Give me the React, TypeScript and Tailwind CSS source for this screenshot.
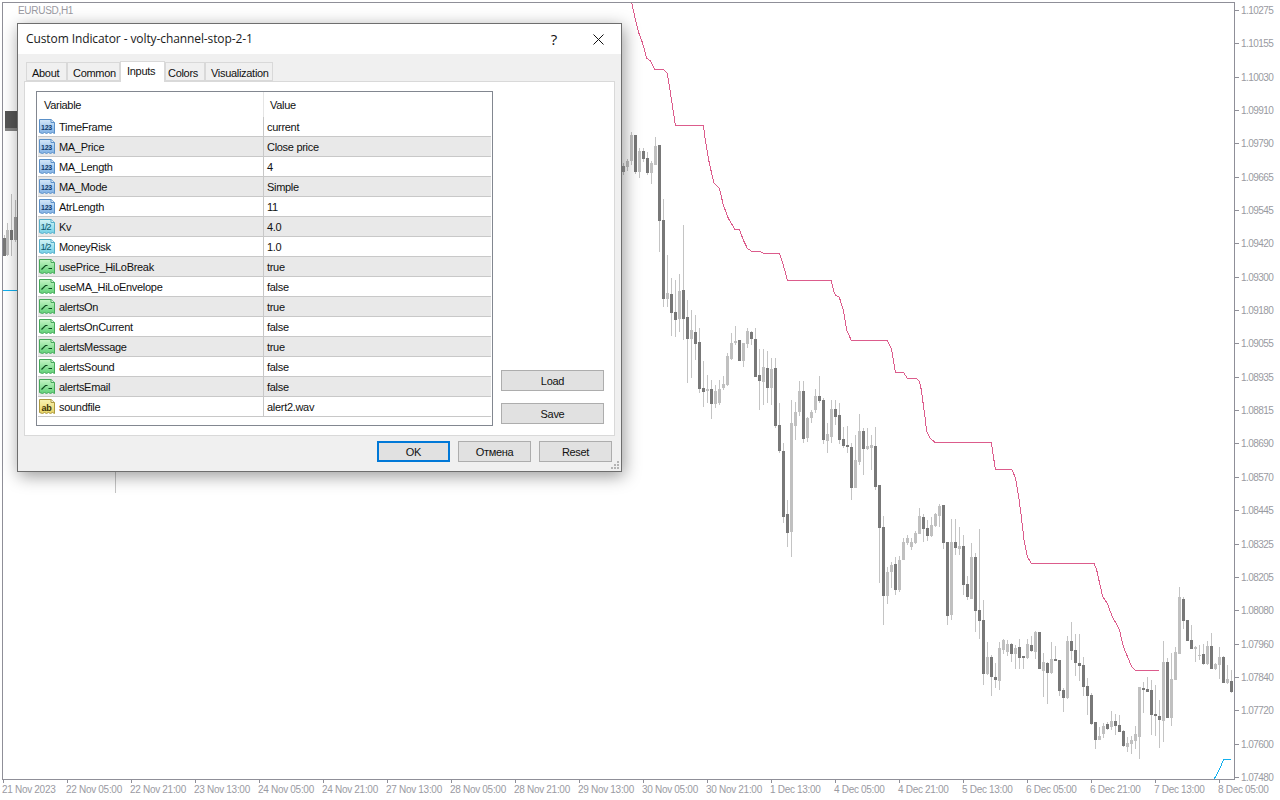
const sans = "font-['Liberation_Sans',Arial,sans-serif]"

// [center x in zoom px, wick top, body top, body bottom, wick bottom, dark] all in 3x coords
const CANDLES_A: number[][] = [
  [10, 490, 498, 516, 525, 2], [22, 478, 482, 500, 512, 0], [34, 396, 405, 483, 495, 0], [46, 405, 405, 516, 522, 1],
  [58, 444, 453, 516, 533, 0], [70, 445, 453, 477, 486, 1], [82, 456, 474, 519, 525, 1], [94, 483, 489, 519, 552, 0],
  [106, 411, 438, 495, 495, 0], [118, 435, 435, 663, 755, 1], [130, 597, 660, 897, 921, 1], [142, 765, 879, 897, 921, 0],
  [154, 834, 882, 939, 1008, 1], [166, 840, 936, 960, 1011, 1], [178, 822, 873, 957, 996, 0], [190, 675, 870, 957, 1020, 1],
  [202, 900, 951, 1017, 1150, 1], [214, 930, 990, 1017, 1133, 0], [226, 945, 996, 1032, 1080, 1], [238, 984, 1026, 1167, 1180, 1],
  [250, 1083, 1164, 1176, 1220, 1], [262, 1125, 1167, 1173, 1210, 0], [274, 1140, 1167, 1212, 1257, 1], [286, 1155, 1173, 1212, 1224, 0],
  [298, 1140, 1167, 1209, 1215, 0], [310, 1128, 1152, 1164, 1170, 0], [322, 1060, 1068, 1155, 1158, 0], [334, 1000, 1029, 1077, 1080, 0],
  [346, 978, 1023, 1029, 1035, 0], [358, 1020, 1020, 1083, 1083, 1], [370, 1030, 1029, 1083, 1100, 0], [382, 984, 993, 1032, 1044, 0],
  [394, 993, 996, 1017, 1035, 1], [406, 984, 1017, 1131, 1130, 1], [418, 1047, 1125, 1143, 1230, 1], [430, 1047, 1101, 1146, 1215, 0],
  [442, 1053, 1104, 1164, 1210, 1], [454, 1074, 1107, 1164, 1215, 0], [466, 1074, 1104, 1278, 1285, 1], [478, 1210, 1275, 1353, 1360, 1],
  [490, 1330, 1353, 1551, 1570, 1], [502, 1500, 1542, 1599, 1640, 1], [514, 1200, 1270, 1596, 1670, 0], [526, 1205, 1236, 1278, 1320, 0],
  [538, 1143, 1173, 1236, 1248, 0], [550, 1143, 1173, 1317, 1330, 1], [562, 1250, 1254, 1314, 1325, 0], [574, 1230, 1236, 1254, 1270, 0],
  [586, 1168, 1188, 1230, 1240, 0], [598, 1128, 1188, 1202, 1210, 1], [610, 1195, 1200, 1320, 1332, 1], [622, 1270, 1302, 1323, 1358, 0],
  [634, 1200, 1227, 1311, 1330, 0], [646, 1200, 1227, 1251, 1275, 1], [658, 1210, 1245, 1320, 1332, 1], [670, 1280, 1317, 1338, 1343, 1],
  [682, 1278, 1335, 1341, 1358, 1], [694, 1330, 1341, 1464, 1500, 1], [706, 1305, 1380, 1464, 1464, 0], [718, 1242, 1293, 1386, 1395, 0],
  [730, 1285, 1293, 1347, 1424, 1], [742, 1285, 1338, 1347, 1350, 0], [754, 1305, 1335, 1345, 1410, 0], [766, 1280, 1338, 1461, 1470, 1],
  [778, 1455, 1455, 1584, 1750, 1], [790, 1548, 1581, 1788, 1875, 1], [802, 1702, 1716, 1788, 1812, 0], [814, 1687, 1695, 1716, 1765, 0],
  [826, 1670, 1692, 1770, 1785, 1], [838, 1668, 1680, 1770, 1776, 0], [850, 1614, 1626, 1680, 1680, 0], [862, 1605, 1614, 1629, 1635, 0],
  [874, 1615, 1626, 1641, 1650, 0], [886, 1593, 1599, 1629, 1632, 0], [898, 1524, 1548, 1602, 1602, 0], [910, 1542, 1551, 1587, 1626, 1],
  [922, 1560, 1584, 1608, 1623, 1], [934, 1550, 1575, 1608, 1611, 0], [946, 1538, 1542, 1578, 1581, 0], [958, 1512, 1518, 1548, 1581, 0],
  [970, 1515, 1515, 1629, 1647, 1], [982, 1626, 1626, 1848, 1875, 1],
]

// same coords, but x runs from 950 and y from 400
const CANDLES_B: number[][] = [
  [4, 358, 425, 645, 660, 0], [16, 357, 426, 444, 465, 1], [28, 380, 438, 447, 465, 0], [40, 405, 438, 555, 585, 1],
  [52, 528, 552, 591, 600, 1], [64, 430, 471, 596, 598, 0], [76, 460, 471, 633, 696, 1], [88, 387, 630, 663, 717, 1],
  [100, 600, 660, 822, 855, 1], [112, 726, 771, 822, 825, 0], [124, 765, 771, 831, 888, 1], [136, 790, 831, 840, 864, 1],
  [148, 726, 744, 843, 870, 0], [160, 717, 720, 750, 762, 0], [172, 720, 732, 756, 768, 0], [184, 730, 732, 762, 786, 1],
  [196, 735, 744, 762, 807, 0], [208, 717, 741, 774, 807, 1], [220, 768, 768, 774, 807, 1], [232, 717, 732, 774, 777, 0],
  [244, 708, 735, 753, 756, 1], [256, 693, 696, 756, 777, 0], [268, 696, 696, 807, 807, 1], [280, 760, 786, 813, 891, 0],
  [292, 786, 789, 819, 912, 1], [304, 726, 777, 819, 822, 0], [316, 738, 777, 783, 783, 1], [328, 780, 780, 873, 888, 1],
  [340, 865, 870, 894, 936, 1], [352, 708, 723, 894, 897, 0], [364, 666, 723, 753, 780, 1], [376, 702, 750, 789, 828, 1],
  [388, 702, 789, 798, 843, 1], [400, 771, 795, 861, 888, 1], [412, 834, 858, 888, 945, 1], [424, 880, 885, 972, 975, 1],
  [436, 966, 966, 1020, 1047, 1], [448, 980, 1008, 1020, 1020, 0], [460, 970, 978, 1002, 1014, 0], [472, 966, 972, 987, 990, 1],
  [484, 933, 963, 981, 990, 0], [496, 942, 963, 978, 1005, 1], [508, 945, 975, 996, 996, 1], [520, 990, 993, 1038, 1041, 1],
  [532, 1011, 1029, 1041, 1056, 0], [544, 1008, 1020, 1032, 1062, 0], [556, 978, 1002, 1023, 1047, 0], [568, 861, 861, 1011, 1077, 0],
  [580, 846, 864, 870, 940, 1], [592, 831, 867, 876, 876, 1], [604, 840, 870, 945, 1005, 1], [616, 855, 942, 948, 1008, 1],
  [628, 900, 948, 960, 1044, 1], [640, 723, 786, 963, 1026, 0], [652, 774, 786, 954, 954, 1], [664, 759, 837, 954, 978, 0],
  [676, 741, 756, 840, 840, 0], [688, 561, 591, 762, 762, 0], [700, 591, 597, 663, 687, 1], [712, 660, 660, 723, 723, 1],
  [724, 675, 720, 747, 747, 1], [736, 738, 741, 747, 786, 0], [748, 735, 765, 768, 780, 0], [760, 732, 762, 792, 795, 1],
  [772, 723, 738, 792, 795, 0], [784, 699, 738, 807, 807, 1], [796, 789, 792, 807, 810, 0], [808, 741, 771, 795, 837, 0],
  [820, 768, 771, 849, 849, 1], [832, 795, 837, 849, 852, 0], [844, 810, 843, 876, 879, 1],
]

const toPx = ([x, wt, bt, bb, wb, dark]: number[], ox: number, oy: number) => ({
  x: Math.floor(ox + x / 3),
  wt: Math.round(oy + wt / 3),
  bt: Math.round(oy + bt / 3),
  bb: Math.round(oy + bb / 3),
  wb: Math.round(oy + wb / 3),
  color: dark === 1 ? '#787878' : dark === 2 ? '#9a9a9a' : '#c0c0c0',
})

const candles = [
  ...CANDLES_A.map((c) => toPx(c, 620, 0)),
  ...CANDLES_B.map((c) => toPx(c, 950, 400)),
  // what sticks out left of and below the dialog
  { x: 4, wt: 235, bt: 238, bb: 256, wb: 256, color: '#787878' },
  { x: 7, wt: 223, bt: 230, bb: 255, wb: 256, color: '#c0c0c0' },
  { x: 11, wt: 194, bt: 230, bb: 240, wb: 256, color: '#787878' },
  { x: 15, wt: 200, bt: 217, bb: 240, wb: 242, color: '#a0a0a0' },
  { x: 115, wt: 470, bt: 470, bb: 470, wb: 493, color: '#c0c0c0' },
]

const RED_A = [
  [35, 8], [42, 40], [55, 95], [68, 130], [80, 175], [92, 183], [104, 207], [130, 207], [142, 220], [150, 270], [166, 375],
  [250, 375], [256, 420], [268, 490], [282, 550], [298, 565], [310, 615], [325, 655], [345, 688], [358, 688], [370, 720],
  [382, 745], [395, 754], [420, 754], [430, 760], [478, 760], [490, 795], [502, 841], [634, 841], [640, 870], [646, 885],
  [658, 892], [670, 930], [680, 990], [694, 1021], [802, 1021], [814, 1045], [826, 1117], [850, 1117], [862, 1135], [888, 1135],
  [898, 1143], [904, 1170], [908, 1200], [915, 1250], [920, 1295], [930, 1315], [945, 1327], [990, 1327],
]
const RED_B = [
  [124, 127], [136, 208], [185, 208], [196, 232], [206, 290], [214, 350], [222, 420], [232, 470], [244, 490], [432, 490],
  [440, 510], [458, 590], [472, 610], [486, 648], [508, 688], [520, 740], [544, 798], [556, 811], [627, 811],
]
const redPoints = [
  ...RED_A.map(([x, y]) => `${620 + x / 3},${y / 3}`),
  ...RED_B.map(([x, y]) => `${950 + x / 3},${400 + y / 3}`),
].join(' ')

const PRICES = [
  '1.10275', '1.10155', '1.10030', '1.09910', '1.09790', '1.09665', '1.09545', '1.09420', '1.09300', '1.09180', '1.09055', '1.08935',
  '1.08815', '1.08690', '1.08570', '1.08445', '1.08325', '1.08205', '1.08080', '1.07960', '1.07840', '1.07720', '1.07600', '1.07480',
]

const TIMES = [
  '21 Nov 2023', '22 Nov 05:00', '22 Nov 21:00', '23 Nov 13:00', '24 Nov 05:00', '24 Nov 21:00', '27 Nov 13:00', '28 Nov 05:00',
  '28 Nov 21:00', '29 Nov 13:00', '30 Nov 05:00', '30 Nov 21:00', '1 Dec 13:00', '4 Dec 05:00', '4 Dec 21:00', '5 Dec 13:00',
  '6 Dec 05:00', '6 Dec 21:00', '7 Dec 13:00', '8 Dec 05:00',
]

type Kind = 'int' | 'dbl' | 'bool' | 'str'

const ROWS: [Kind, string, string][] = [
  ['int', 'TimeFrame', 'current'],
  ['int', 'MA_Price', 'Close price'],
  ['int', 'MA_Length', '4'],
  ['int', 'MA_Mode', 'Simple'],
  ['int', 'AtrLength', '11'],
  ['dbl', 'Kv', '4.0'],
  ['dbl', 'MoneyRisk', '1.0'],
  ['bool', 'usePrice_HiLoBreak', 'true'],
  ['bool', 'useMA_HiLoEnvelope', 'false'],
  ['bool', 'alertsOn', 'true'],
  ['bool', 'alertsOnCurrent', 'false'],
  ['bool', 'alertsMessage', 'true'],
  ['bool', 'alertsSound', 'false'],
  ['bool', 'alertsEmail', 'false'],
  ['str', 'soundfile', 'alert2.wav'],
]

const ICON_COLORS: Record<Kind, { top: string; bottom: string; line: string; ink: string }> = {
  int: { top: '#d6e8f9', bottom: '#7fb0e4', line: '#5a90c8', ink: '#123a6b' },
  dbl: { top: '#d5f4f6', bottom: '#72cfe6', line: '#55aec9', ink: '#0f5a70' },
  bool: { top: '#c6f4c6', bottom: '#5fd076', line: '#45a85a', ink: '#0d4a1e' },
  str: { top: '#f9f3b4', bottom: '#e6d264', line: '#ad9a40', ink: '#3d3408' },
}

function TypeIcon({ kind }: { kind: Kind }) {
  const c = ICON_COLORS[kind]
  const id = `grad-${kind}`
  return (
    <svg width="16" height="16" viewBox="0 0 16 16" className="shrink-0">
      <defs>
        <linearGradient id={id} x1="0" y1="0" x2="0" y2="1">
          <stop offset="0" stopColor={c.top} />
          <stop offset="1" stopColor={c.bottom} />
        </linearGradient>
      </defs>
      <path
        d="M0.5 0.5 H12 L15.5 3.5 V14.5 L13.5 13.5 L11.5 14.5 L9.5 13.5 L7.5 14.5 L5.5 13.5 L3.5 14.5 L0.5 13.5 Z"
        fill={`url(#${id})`}
        stroke={c.line}
      />
      <path d="M12 0.5 V3.5 H15.5" fill="#fff" fillOpacity="0.6" stroke={c.line} />
      {kind === 'int' && (
        <text x="7.5" y="11" textAnchor="middle" fontSize="7" fontWeight="700" letterSpacing="-0.2" fill={c.ink} fontFamily="'Liberation Sans',sans-serif">
          123
        </text>
      )}
      {kind === 'dbl' && (
        <text x="6.5" y="10.5" textAnchor="middle" fontSize="9.5" letterSpacing="-1" fill={c.ink} fontFamily="'Liberation Sans',sans-serif">
          1/2
        </text>
      )}
      {kind === 'str' && (
        <text x="7.5" y="11.5" textAnchor="middle" fontSize="9" fontWeight="700" fill={c.ink} fontFamily="'Liberation Sans',sans-serif">
          ab
        </text>
      )}
      {kind === 'bool' && <path d="M2.5 10.5 L6.5 6.5 H8.5 M9.5 9.5 H13" fill="none" stroke={c.ink} strokeWidth="1.2" />}
    </svg>
  )
}

function Chart() {
  return (
    <svg width="1231" height="776" viewBox="3 3 1231 776" className="block">
      {candles.map((c, i) => (
        <g key={i} shapeRendering="crispEdges">
          <rect x={c.x} y={c.wt} width="1" height={Math.max(c.wb - c.wt, 1)} fill="#c4c4c4" />
          <rect x={c.x - 1} y={c.bt} width="3" height={Math.max(c.bb - c.bt, 1)} fill={c.color} />
        </g>
      ))}
      <polyline points={redPoints} fill="none" stroke="#dc5c8c" strokeWidth="1" shapeRendering="crispEdges" />
      <polyline points="1214,779.5 1220,768 1223.5,760 1231,759.5" fill="none" stroke="#12b0ee" strokeWidth="1" shapeRendering="crispEdges" />
      <line x1="3" y1="290.5" x2="17" y2="290.5" stroke="#12b0ee" />
      <g shapeRendering="crispEdges">
        <rect x="5" y="111" width="12" height="17" fill="#555555" />
        <rect x="5" y="128" width="12" height="3" fill="#858585" />
      </g>
    </svg>
  )
}

function TabStrip() {
  const tabs = [
    { label: 'About', cls: 'w-[41px] pl-[5px]' },
    { label: 'Common', cls: 'w-[53px] pl-[5px]' },
    { label: 'Inputs', cls: 'w-[45px] pl-[6px]', active: true },
    { label: 'Colors', cls: 'w-[40px] pl-[2px]' },
    { label: 'Visualization', cls: 'w-[68px] pl-[5px]' },
  ]
  return (
    <div className="flex items-end h-[21px] ml-[8px] mt-[7px] relative z-10">
      {tabs.map((t) =>
        t.active ? (
          <div key={t.label} className={`${t.cls} h-[21px] bg-white border border-b-0 border-[#d9d9d9] flex items-start pt-[2px] leading-[15px]`}>
            {t.label}
          </div>
        ) : (
          <div key={t.label} className={`${t.cls} h-[19px] mb-[1px] pt-[3px] bg-[#f0f0f0] border border-[#d9d9d9] flex items-center`}>
            {t.label}
          </div>
        )
      )}
    </div>
  )
}

function InputsTable() {
  return (
    <div className="w-[457px] h-[335px] border border-[#828790] bg-white px-[1px]">
      <div className="flex h-[25px] items-center">
        <div className="w-[226px] pl-[6px] pt-[2px] border-r border-[#e5e5e5] h-full flex items-center">Variable</div>
        <div className="pl-[6px] pt-[2px]">Value</div>
      </div>
      {ROWS.map(([kind, name, value], i) => (
        <div key={name} className={`flex h-[20px] border-b border-[#c8c8c8] ${i % 2 === 1 ? 'bg-[#e9e9e9]' : 'bg-white'}`}>
          <div className="w-[226px] pl-[1px] border-r border-[#c8c8c8] flex items-center gap-[4px]">
            <TypeIcon kind={kind} />
            <span className="mt-[2px]">{name}</span>
          </div>
          <div className="pl-[3px] pt-[2px] flex items-center">{value}</div>
        </div>
      ))}
    </div>
  )
}

function Btn({ label, className }: { label: string; className?: string }) {
  return <div className={`bg-[#e1e1e1] pt-[2px] flex items-center justify-center ${className}`}>{label}</div>
}

function Dialog() {
  return (
    <div
      className={`absolute left-[17px] top-[23px] w-[605px] h-[449px] border border-[#6e6e6e] bg-[#f0f0f0] shadow-[2px_4px_16px_rgba(0,0,0,0.4)] flex flex-col text-[11px] tracking-[-0.3px] text-[#111] ${sans}`}
    >
      <div className="h-[30px] bg-white flex items-center shrink-0">
        <span className="ml-[8px] text-[12px] tracking-[-0.1px] font-['Open_Sans',sans-serif] text-[#1a1a1a]">Custom Indicator - volty-channel-stop-2-1</span>
        <span className="ml-auto text-[15px] font-medium font-['Open_Sans',sans-serif] mr-[36px]">?</span>
        <svg width="11" height="11" viewBox="0 0 11 11" className="mr-[17px]">
          <path d="M0.5 0.5 L10.5 10.5 M10.5 0.5 L0.5 10.5" stroke="#111" fill="none" />
        </svg>
      </div>
      <TabStrip />
      <div className="mx-[6px] h-[355px] -mt-[1px] bg-white border border-[#d9d9d9] flex pl-[11px] pt-[9px]">
        <InputsTable />
        <div className="ml-[8px] w-[103px] h-[335px] flex flex-col justify-end pb-[2px] gap-[12px]">
          <Btn label="Load" className="h-[21px] border border-[#adadad]" />
          <Btn label="Save" className="h-[21px] border border-[#adadad]" />
        </div>
      </div>
      <div className="flex justify-end gap-[8px] mt-[5px] mr-[9px]">
        <Btn label="OK" className="w-[73px] h-[21px] border-2 border-[#0078d7]" />
        <Btn label="Отмена" className="w-[73px] h-[21px] border border-[#adadad]" />
        <Btn label="Reset" className="w-[73px] h-[21px] border border-[#adadad]" />
      </div>
      <svg width="8" height="8" viewBox="0 0 8 8" className="absolute right-[2px] bottom-[2px]">
        <g fill="#b4b4b4" shapeRendering="crispEdges">
          <rect x="6" y="0" width="2" height="2" />
          <rect x="3" y="3" width="2" height="2" />
          <rect x="6" y="3" width="2" height="2" />
          <rect x="0" y="6" width="2" height="2" />
          <rect x="3" y="6" width="2" height="2" />
          <rect x="6" y="6" width="2" height="2" />
        </g>
      </svg>
    </div>
  )
}

export default function App() {
  return (
    <div className={`relative w-[1280px] h-[800px] overflow-hidden bg-white text-[10px] text-[#9a9aa2] ${sans}`}>
      <div className="flex h-[780px]">
        <div className="relative ml-[2px] mt-[2px] w-[1233px] h-[778px] border border-[#8f8f98] shrink-0">
          <Chart />
          <span className="absolute left-[15px] top-[1px] leading-[14px] tracking-[-0.3px]">EURUSD,H1</span>
        </div>
        <div className="pt-[3px]">
          {PRICES.map((p) => (
            <div key={p} className="flex h-[33.35px] items-start">
              <div className="mt-[7px] w-[4px] h-[1px] bg-[#8f8f98]" />
              <span className="ml-[2px] mt-[1px] leading-[14px] tracking-[-0.55px]">{p}</span>
            </div>
          ))}
        </div>
      </div>
      <div className="flex pl-[3px]">
        {TIMES.map((t) => (
          <div key={t} className="w-[64px] shrink-0">
            <div className="w-[1px] h-[3px] bg-[#8f8f98]" />
            <div className="-ml-[1px] leading-[14px] tracking-[-0.3px] whitespace-nowrap">{t}</div>
          </div>
        ))}
      </div>
      <Dialog />
    </div>
  )
}
